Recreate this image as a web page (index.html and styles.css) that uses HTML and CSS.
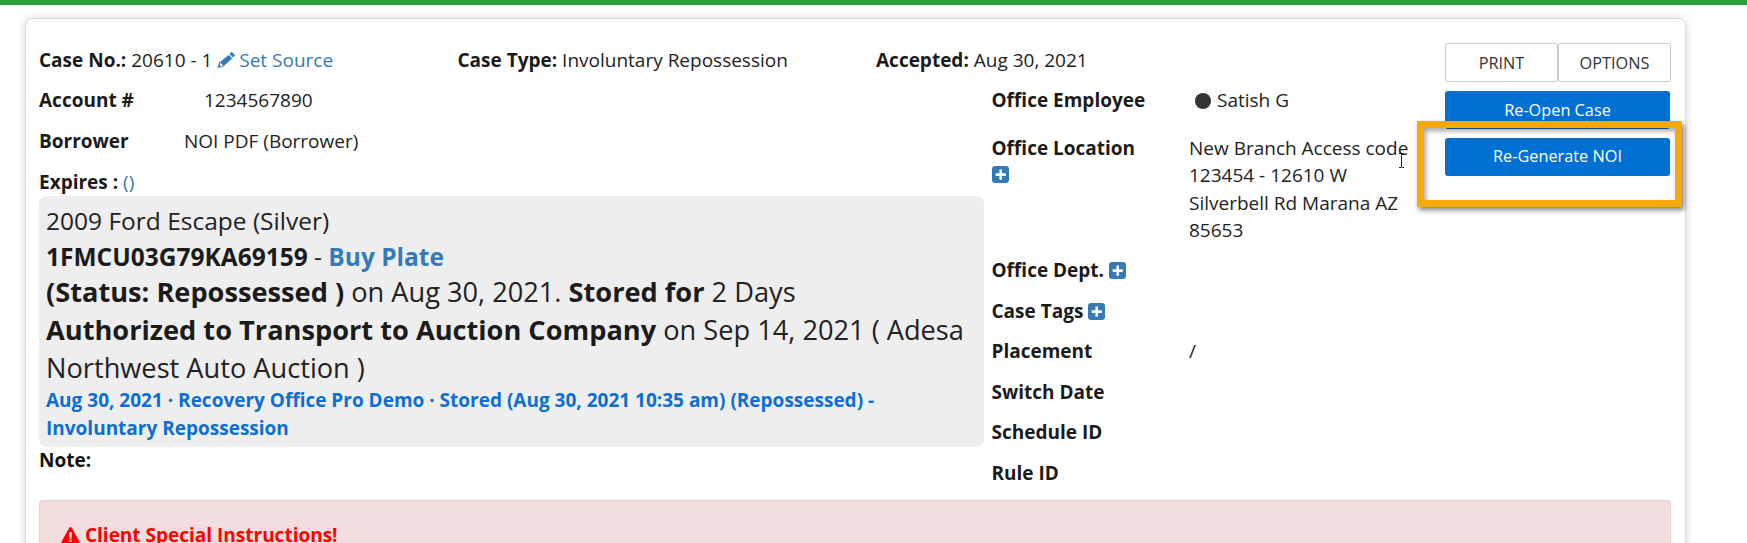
FILE: index.html
```html
<!DOCTYPE html>
<html lang="en">
<head>
<meta charset="utf-8">
<title>Case</title>
<link rel="stylesheet" href="styles.css">
</head>
<body>
<div class="topbar"></div>
<main class="card">
  <div class="layout">
    <div class="content">
      <div class="head">
        <div><b>Case No.:</b> 20610 - 1 <a class="link" href="#"><svg class="ico-pencil" viewBox="0 0 18 16"><path fill-rule="evenodd" d="M14 .4a1 1 0 0 1 1.300 0l2.300 2.100a1 1 0 0 1 0 1.300L16 5.400l-3.500-3.300zM11.700 2.900l3.500 3.300-8.800 8.300L.4 16l1.600-5.300zM3.400 10.800l-.7 2.400 1.200 1.100 2.500-.7z"/></svg> Set Source</a></div>
        <div><b>Case Type:</b> Involuntary Repossession</div>
        <div><b>Accepted:</b> Aug 30, 2021</div>
      </div>
      <div class="columns">
        <section class="left">
          <div class="row"><b class="lbl-account">Account #</b>1234567890</div>
          <div class="row"><b class="lbl-borrower">Borrower</b>NOI PDF (Borrower)</div>
          <div class="row row-expires"><b>Expires :</b> <a class="link" href="#">()</a></div>
          <div class="vehicle">
            <div class="vehicle-title">2009 Ford Escape (Silver)</div>
            <div class="vehicle-vin"><b>1FMCU03G79KA69159</b> - <a class="link strong" href="#">Buy Plate</a></div>
            <div class="vehicle-big"><b>(Status: Repossessed )</b> on Aug 30, 2021. <b>Stored for</b> 2 Days</div>
            <div class="vehicle-big"><b>Authorized to Transport to Auction Company</b> on Sep 14, 2021 ( Adesa Northwest Auto Auction )</div>
            <a class="history" href="#">Aug 30, 2021 · Recovery Office Pro Demo · Stored (Aug 30, 2021 10:35 am) (Repossessed) - Involuntary Repossession</a>
          </div>
          <div class="note">Note:</div>
        </section>
        <section class="right">
          <div class="info info-emp"><b>Office Employee</b><span class="val"><span class="dot"></span>Satish G</span></div>
          <div class="info"><div class="key"><b>Office Location</b><svg class="plus plus-below" viewBox="0 0 16 16"><path fill-rule="evenodd" d="M3 0h10a3 3 0 0 1 3 3v10a3 3 0 0 1-3 3H3a3 3 0 0 1-3-3V3a3 3 0 0 1 3-3zm4 3.2v3.6H3.4v2.6H7V13h2.400V9.400H13V6.800H9.400V3.200z"/></svg></div><span class="val">New Branch Access code 123454 - 12610 W Silverbell Rd Marana AZ 85653</span></div>
          <div class="info"><div class="key"><b>Office Dept.</b> <svg class="plus" viewBox="0 0 16 16"><path fill-rule="evenodd" d="M3 0h10a3 3 0 0 1 3 3v10a3 3 0 0 1-3 3H3a3 3 0 0 1-3-3V3a3 3 0 0 1 3-3zm4 3.2v3.6H3.4v2.6H7V13h2.400V9.400H13V6.800H9.400V3.200z"/></svg></div></div>
          <div class="info"><div class="key"><b>Case Tags</b> <svg class="plus" viewBox="0 0 16 16"><path fill-rule="evenodd" d="M3 0h10a3 3 0 0 1 3 3v10a3 3 0 0 1-3 3H3a3 3 0 0 1-3-3V3a3 3 0 0 1 3-3zm4 3.2v3.6H3.4v2.6H7V13h2.400V9.400H13V6.800H9.400V3.200z"/></svg></div></div>
          <div class="info"><b>Placement</b><span class="val">/</span></div>
          <div class="info"><b>Switch Date</b></div>
          <div class="info"><b>Schedule ID</b></div>
          <div class="info"><b>Rule ID</b></div>
        </section>
      </div>
    </div>
    <aside class="actions">
      <div class="btn-group"><button class="btn-plain">PRINT</button><button class="btn-plain">OPTIONS</button></div>
      <button class="btn-primary reopen">Re-Open Case</button>
      <button class="btn-primary">Re-Generate NOI</button>
    </aside>
  </div>
  <div class="alert"><svg class="warn" viewBox="0 0 18 16"><path fill-rule="evenodd" d="M9 0c.5 0 .9.3 1.2.7l7.500 13.400c.4.8-.1 1.900-1.200 1.900h-15C.4 16-.1 14.900.3 14.100L7.800.7C8.100.3 8.500 0 9 0zM7.700 5l.3 6h2l.3-6zM7.800 12v2.200h2.400V12z"/></svg> <b>Client Special Instructions!</b></div>
</main>
<div class="highlight"></div>
<svg class="cursor" viewBox="0 0 7 15"><path d="M1 .5h2l.5.5.5-.5h2M3.500 1v13M1 14.500h2l.5-.5.5.5h2" fill="none" stroke="#222" stroke-width="1"/></svg>
</body>
</html>
```
FILE: styles.css
```css
* { box-sizing: border-box; }
html, body { margin: 0; height: 543px; overflow: hidden; }
body {
  position: relative;
  background: #fff;
  color: #222;
  font: 400 19px/27.2px "Open Sans", sans-serif;
}
b { font-weight: 700; color: #1b1b1b; }
a { text-decoration: none; }
.topbar { height: 5px; background: #28a138; }
.card {
  margin: 13px 61px 0 25px;
  height: 540px;
  padding: 24px 13px 0;
  background: #fff;
  border: 1px solid #ddd;
  border-radius: 8px;
  box-shadow: 0 1px 8px rgba(0,0,0,.18);
}
.layout { display: flex; }
.content { width: 1406px; flex: none; padding-top: 3.500px; }
.head { display: grid; grid-template-columns: 418.500px 418.500px 1fr; height: 40px; }
.link { color: #337ab7; }
.strong { font-weight: 700; }
.ico-pencil { width: 18px; height: 16px; fill: #337ab7; vertical-align: -1px; margin-right: -1px; }
.columns { display: flex; }
.left { width: 945px; flex: none; }
.row { height: 41px; }
.row-expires { height: 27px; }
.lbl-account { display: inline-block; width: 165px; }
.lbl-borrower { display: inline-block; width: 145px; }
.vehicle {
  background: #eee;
  border-radius: 8px;
  padding: 8px 7px 5px;
  font-size: 24.500px;
  line-height: 1.4;
}
.vehicle-title { margin-bottom: 2px; }
.vehicle-vin { margin-bottom: -1px; }
.vehicle-big { font-size: 27.200px; }
.history {
  display: block;
  font-size: 19px;
  font-weight: 700;
  line-height: 27.200px;
  color: #0d6fcf;
}
.note { font-weight: 700; color: #111; }
.right { margin-left: 7.500px; width: 452px; }
.info { display: flex; margin-bottom: 13.300px; }
.info-emp { margin-bottom: 21.500px; }
.info > b, .key { width: 197.500px; flex: none; }
.info .val { width: 230px; }
.plus { width: 17px; height: 17px; fill: #337ab7; vertical-align: -2px; }
.plus-below { display: block; margin-top: 4px; }
.dot { display: inline-block; width: 16px; height: 16px; border-radius: 50%; background: #333; margin: 0 6px 0 6px; vertical-align: -2px; }
.actions { width: 226px; flex: none; }
.btn-group { display: flex; margin-bottom: 9px; }
button { font: inherit; cursor: pointer; }
.btn-plain {
  flex: 1;
  height: 39px;
  background: #fff;
  color: #333;
  font-size: 16.300px;
  border: 1px solid #ccc;
  border-radius: 2px;
  padding: 2px 0 0;
}
.btn-primary {
  display: block;
  width: 225px;
  height: 38px;
  background: #0070d2;
  color: #fff;
  font-size: 16.300px;
  border: 0;
  border-radius: 3px;
  padding: 0;
}
.reopen { margin-bottom: 9px; padding-top: 1px; }
.alert {
  position: absolute;
  left: 39px;
  top: 500px;
  width: 1632px;
  height: 43px;
  background: #f2dede;
  border: 1px solid #ebccd1;
  border-bottom: 0;
  border-radius: 4px 4px 0 0;
  padding: 21px 21px 0;
  color: #f00;
  overflow: hidden;
}
.alert b { color: #f00; }
.warn { width: 19px; height: 17px; fill: #f00; vertical-align: -2px; }
.highlight {
  position: absolute;
  left: 1417px;
  top: 121px;
  width: 265px;
  height: 86px;
  border: 7px solid #f9a80a;
  box-shadow: 2px 3px 5px rgba(0,0,0,.5), inset 2px 3px 5px rgba(0,0,0,.35);
}
.cursor { position: absolute; left: 1398px; top: 153px; width: 7px; height: 15px; }
```
